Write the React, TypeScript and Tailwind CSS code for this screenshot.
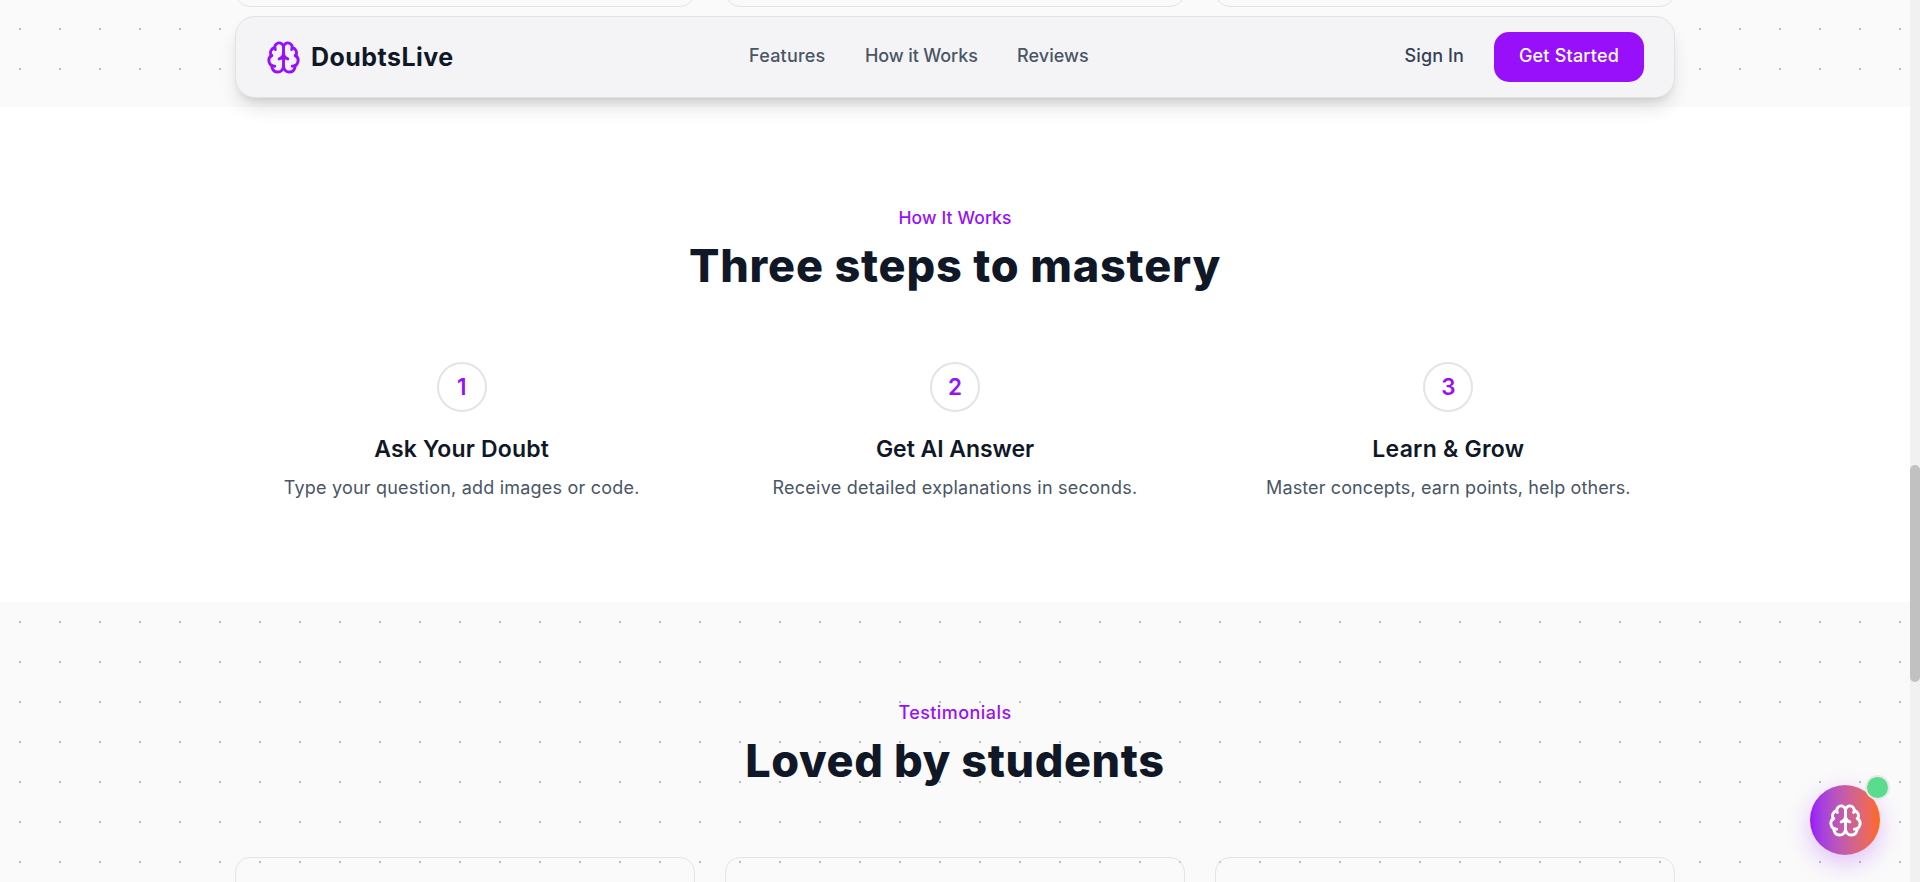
import type { ReactNode } from 'react';
import { Brain } from 'lucide-react';

// ── Data ──────────────────────────────────────────────────────────────────────

const NAV_LINKS = [
  { label: 'Features', className: 'w-[76px] tracking-[0.22px]' },
  { label: 'How it Works', className: 'w-[112px] tracking-[-0.12px]' },
  { label: 'Reviews', className: 'w-[71px] tracking-[0.05px]' },
];

const STEPS = [
  {
    title: 'Ask Your Doubt',
    text: 'Type your question, add images or code.',
    titleClass: 'tracking-[0.16px]',
    textClass: 'tracking-[0.21px]',
  },
  {
    title: 'Get AI Answer',
    text: 'Receive detailed explanations in seconds.',
    titleClass: 'tracking-[-0.05px]',
    textClass: 'tracking-[0.24px]',
  },
  {
    title: 'Learn & Grow',
    text: 'Master concepts, earn points, help others.',
    titleClass: 'tracking-[0.24px]',
    textClass: 'tracking-[0.12px]',
  },
];

// ── Navbar ────────────────────────────────────────────────────────────────────

function Navbar() {
  return (
    <header className="absolute top-4 left-[235px] z-20 flex h-[82px] w-[1440px] items-center rounded-[20px] border border-[#e2e2e5] bg-[#f4f4f7] px-[30px] shadow-[0_12px_19px_-4px_rgba(0,0,0,0.14),0_5px_8px_-5px_rgba(0,0,0,0.12)]">
      <div className="flex w-[483px] items-center gap-2.5">
        <Brain className="size-[35px] text-[#9810fa]" strokeWidth={2} />
        <span className="pt-px text-[25px] font-bold tracking-[0.45px] whitespace-nowrap text-[#101828]">DoubtsLive</span>
      </div>
      <nav className="flex items-center gap-10 pb-[3px] text-[18px] font-medium whitespace-nowrap text-[#4a5565]">
        {NAV_LINKS.map(({ label, className }) => (
          <a key={label} className={className}>{label}</a>
        ))}
      </nav>
      <div className="ml-auto flex items-center gap-[30px] text-[18px] font-medium whitespace-nowrap">
        <a className="pb-[3px] tracking-[0.1px] text-[#364153]">Sign In</a>
        <button className="h-[50px] w-[150px] rounded-[15px] bg-[#9810fa] pb-[3px] tracking-[0.2px] text-white">Get Started</button>
      </div>
    </header>
  );
}

// ── Section heading ───────────────────────────────────────────────────────────

type HeadingProps = { label: string; labelClass: string; titleClass: string; children: ReactNode };

function SectionHeading({ label, labelClass, titleClass, children }: HeadingProps) {
  return (
    <div className="mb-[62px] text-center">
      <p className={`leading-7 font-medium text-[#9810fa] ${labelClass}`}>{label}</p>
      <h2 className={`text-[45px] leading-[68px] font-extrabold text-[#101828] ${titleClass}`}>{children}</h2>
    </div>
  );
}

// ── Sections ──────────────────────────────────────────────────────────────────

function FeaturesTail() {
  return (
    <section className="h-[107px] bg-[#fafafa] bg-[radial-gradient(#bbb_1px,transparent_1px)] bg-[length:40px_40px] bg-[position:0_9px]">
      <div className="mx-auto grid w-[1440px] grid-cols-3 gap-[30px]">
        {[0, 1, 2].map((i) => (
          <div key={i} className="-mt-10 h-[47px] rounded-[15px] border border-[#e4e4e4]" />
        ))}
      </div>
    </section>
  );
}

function HowItWorks() {
  return (
    <section className="h-[495px] bg-white pt-[97px]">
      <SectionHeading label="How It Works" labelClass="text-[17.5px] tracking-[0.12px]" titleClass="tracking-[0.82px]">
        Three steps to mastery
      </SectionHeading>
      <div className="mx-auto grid w-[1440px] grid-cols-3 gap-10">
        {STEPS.map(({ title, text, titleClass, textClass }, i) => (
          <div key={title} className="flex flex-col items-center text-center">
            <div className="flex size-[50px] items-center justify-center rounded-full border-2 border-[#e4e4e4] pb-px text-[22.5px] font-semibold text-[#9810fa]">
              {i + 1}
            </div>
            <h3 className={`mt-5 text-[23px] leading-[34px] font-semibold text-[#101828] ${titleClass}`}>{title}</h3>
            <p className={`mt-2 text-[18px] leading-7 text-[#4a5565] ${textClass}`}>{text}</p>
          </div>
        ))}
      </div>
    </section>
  );
}

function Testimonials() {
  return (
    <section className="h-[280px] overflow-hidden bg-[#fafafa] bg-[radial-gradient(#bbb_1px,transparent_1px)] bg-[length:40px_40px] pt-[97px]">
      <SectionHeading label="Testimonials" labelClass="text-[18px] tracking-[0.44px]" titleClass="tracking-[0.6px]">
        Loved by students
      </SectionHeading>
      <div className="mx-auto grid w-[1440px] grid-cols-3 gap-[30px]">
        {[0, 1, 2].map((i) => (
          <div key={i} className="h-60 rounded-[15px] border border-[#e4e4e4]" />
        ))}
      </div>
    </section>
  );
}

// ── Floating assistant button ─────────────────────────────────────────────────

function AssistantButton() {
  return (
    <button className="absolute top-[785px] left-[1810px] z-20 flex size-[70px] items-center justify-center rounded-full bg-linear-to-r from-[#9810fa] to-[#ff6900] text-white shadow-[0_8px_24px_rgba(152,16,250,0.25)]">
      <Brain className="size-[35px]" strokeWidth={2} />
      <span className="absolute -top-2.5 -right-2.5 size-[25px] rounded-full border-2 border-[#e8e8e8] bg-[#5bdb8c]" />
    </button>
  );
}

// ── Page ──────────────────────────────────────────────────────────────────────

export default function App() {
  return (
    <div className="relative flex h-[882px] w-[1920px] overflow-hidden font-['Inter',sans-serif]">
      <main className="w-[1910px]">
        <FeaturesTail />
        <HowItWorks />
        <Testimonials />
      </main>
      <div className="w-2.5 bg-[#f1f1f1] pt-[465px]">
        <div className="h-[217px] rounded-full bg-[#c1c1c1]" />
      </div>
      <Navbar />
      <AssistantButton />
    </div>
  );
}
